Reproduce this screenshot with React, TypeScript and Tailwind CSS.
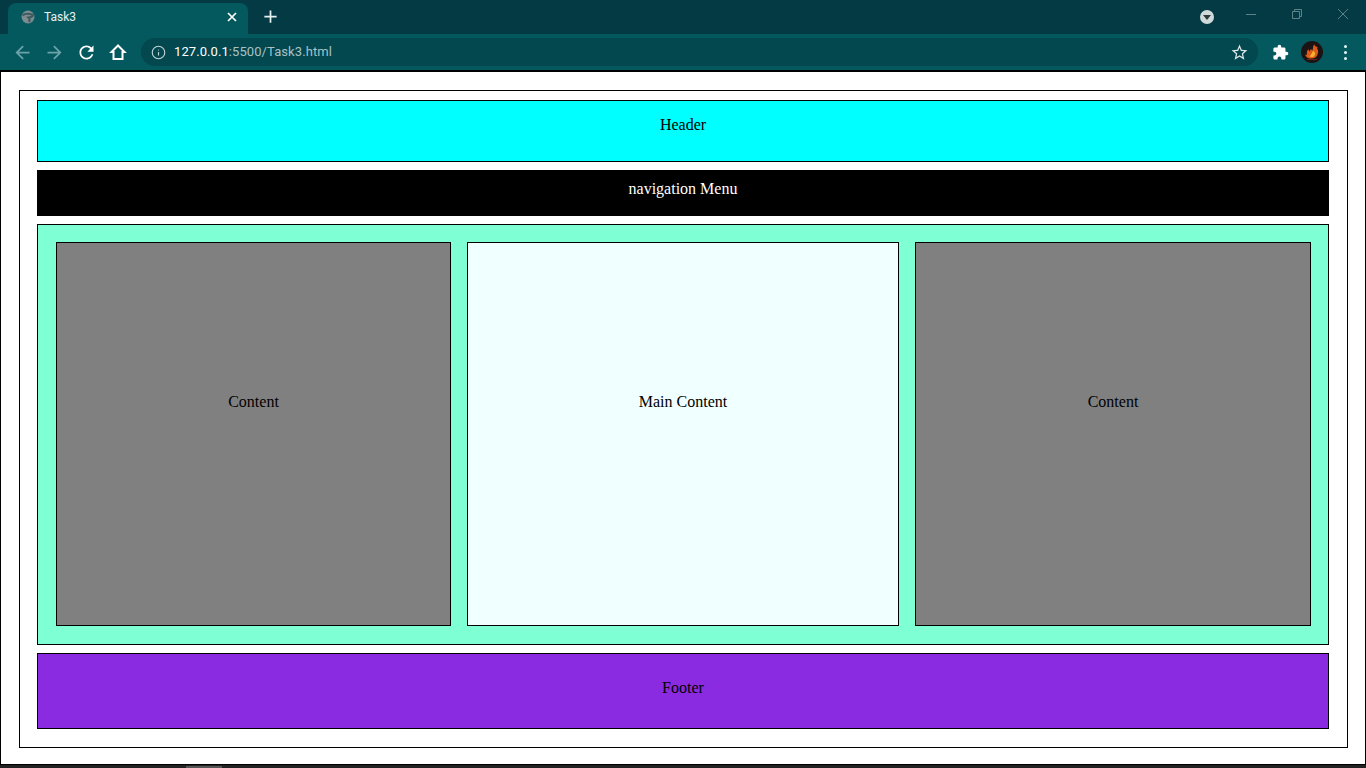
import { Info } from "lucide-react"

function Glyph({ d, className }: { d: string; className: string }) {
  return (
    <svg viewBox="0 0 24 24" className={className} fill="currentColor">
      <path d={d} />
    </svg>
  )
}

function ToolButton({ d, className }: { d: string; className: string }) {
  return (
    <div className="w-8 h-8 flex items-center justify-center shrink-0">
      <Glyph d={d} className={className} />
    </div>
  )
}

function TabStrip() {
  return (
    <div className="h-[34px] bg-[#033a43] flex items-end shrink-0">
      <div className="ml-2 w-[240px] h-[31px] bg-[#04595f] rounded-t-lg flex items-center pl-3 pr-2 pb-[3px]">
        <svg viewBox="0 0 16 16" className="w-4 h-4 shrink-0">
          <circle cx="8" cy="8" r="6.500" fill="#7c8c90" />
          <path d="M2.500 6.500C5 4.500 9 4.500 13 6c-.5 2-2.500 2.500-4.500 2.500 1 1 1.500 3 .5 4.500" fill="none" stroke="#3f5a5f" strokeWidth="2" />
        </svg>
        <span className="ml-2 text-xs text-[#e6f0f1] font-['Roboto',sans-serif] flex-1">Task3</span>
        <svg viewBox="0 0 10 10" className="w-2.5 h-2.5 mr-[3px]" stroke="#ffffff" strokeWidth="1.7" fill="none">
          <path d="M1 1l8 8M9 1l-8 8" />
        </svg>
      </div>
      <div className="w-[44px] h-[34px] flex items-center justify-center pb-px">
        <Glyph d="M19 13h-6v6h-2v-6H5v-2h6V5h2v6h6v2z" className="w-[21px] h-[21px] text-[#e6f0f1]" />
      </div>
      <div className="flex-1" />
      <div className="h-[34px] flex items-center">
        <div className="w-[14px] h-[14px] rounded-full bg-[#d0dadb] flex items-center justify-center">
          <div className="w-0 h-0 border-l-[4px] border-r-[4px] border-t-[5px] border-l-transparent border-r-transparent border-t-[#2f3a3d]" />
        </div>
        <div className="w-[10px] h-px bg-[#5f8288] ml-8 mb-[6px]" />
        <svg viewBox="0 0 10 10" className="w-2.5 h-2.5 ml-9 mb-[6px]" stroke="#5f8288" fill="none">
          <path d="M.5 2.500h7v7h-7zM2.500 2.500v-2h7v7h-2" />
        </svg>
        <svg viewBox="0 0 10 10" className="w-2.5 h-2.5 ml-9 mr-[18px] mb-[6px]" stroke="#5f8288" fill="none">
          <path d="M0 0l10 10M10 0L0 10" />
        </svg>
      </div>
    </div>
  )
}

function Toolbar() {
  return (
    <div className="h-9 bg-[#04595f] flex items-center pl-[6px] shrink-0">
      <ToolButton d="M20 11H7.830l5.590-5.590L12 4l-8 8 8 8 1.410-1.410L7.830 13H20v-2z" className="w-[21px] h-[21px] text-[#6ba3a8]" />
      <ToolButton d="M4 13h12.170l-5.590 5.590L12 20l8-8-8-8-1.410 1.410L16.170 11H4v2z" className="w-[21px] h-[21px] text-[#6ba3a8]" />
      <ToolButton d="M17.650 6.350C16.200 4.900 14.210 4 12 4c-4.420 0-7.990 3.580-7.990 8s3.570 8 7.990 8c3.730 0 6.840-2.550 7.730-6h-2.080c-.820 2.330-3.040 4-5.650 4-3.310 0-6-2.690-6-6s2.690-6 6-6c1.660 0 3.140.690 4.220 1.780L13 11h7V4l-2.350 2.350z" className="w-[21px] h-[21px] text-white" />
      <div className="w-8 h-8 flex items-center justify-center shrink-0">
        <svg viewBox="0 0 18 18" className="w-[18px] h-[18px]" fill="none" stroke="#ffffff" strokeWidth="2" strokeLinejoin="miter">
          <path d="M9 2.500 2.500 9H4.500v7h9V9h2z" />
        </svg>
      </div>
      <div className="ml-[7px] flex-1 h-7 rounded-full bg-[#03474f] flex items-center pl-[10px] pr-[9px]">
        <Info className="w-[15px] h-[15px] text-[#c3d5d7]" strokeWidth={1.8} />
        <div className="ml-[8px] flex-1 text-[13px] tracking-[0.08px] font-['Roboto',sans-serif] text-[#a6c2c5]">
          <span className="text-white">127.0.0.1</span>:5500/Task3.html
        </div>
        <Glyph
          d="M22 9.240l-7.190-.620L12 2 9.190 8.630 2 9.240l5.460 4.730L5.820 21 12 17.270 18.180 21l-1.630-7.030L22 9.240zM12 15.400l-3.760 2.270 1-4.280-3.320-2.880 4.380-.380L12 6.100l1.710 4.040 4.380.380-3.320 2.880 1 4.280L12 15.400z"
          className="w-[19px] h-[19px] text-[#dbe6e7]"
        />
      </div>
      <div className="ml-[6px]" />
      <ToolButton
        d="M20.500 11H19V7c0-1.100-.900-2-2-2h-4V3.500C13 2.120 11.880 1 10.500 1S8 2.120 8 3.500V5H4c-1.100 0-1.990.900-1.990 2v3.800H3.500c1.490 0 2.700 1.210 2.700 2.700s-1.210 2.700-2.700 2.700H2V20c0 1.100.900 2 2 2h3.800v-1.500c0-1.490 1.210-2.700 2.700-2.700 1.490 0 2.700 1.210 2.700 2.700V22H17c1.100 0 2-.900 2-2v-4h1.500c1.380 0 2.500-1.120 2.500-2.500S21.880 11 20.500 11z"
        className="w-[17px] h-[17px] text-white"
      />
      <div className="w-8 h-8 flex items-center justify-center shrink-0">
        <svg viewBox="0 0 22 22" className="w-[22px] h-[22px]">
          <circle cx="11" cy="11" r="11" fill="#1c1414" />
          <path d="M13 3c.5 2 2 3 3.500 3-.5 1-.5 2 .5 3 .5 3-.5 6-2.500 7.500-2 1.200-5 1.500-7.500.5-1.500-.8-2.500-2-3-3.500 1 .5 1.500.5 2 0-.5-2 0-4 1.500-5.500 0 1.200.5 2 1 2.500.5-1.500 1-2 2-2.500 0 1 .5 1.500 1 1.500.5-2 .5-4.500 1.500-6z" fill="#dd5a1a" />
          <path d="M12 9c.5 1.500 1 2 2 2.500.3 2-.5 3.500-2 4.500-1.500.3-3 0-4-1 1 0 1.500-.5 2-1.500.8-.5 1.500-2.500 2-4.500z" fill="#f6b32d" />
          <path d="M6 18.500h10" stroke="#8a2a12" strokeWidth="0.700" />
        </svg>
      </div>
      <div className="w-8 h-8 ml-px flex flex-col items-center justify-center gap-[3px] shrink-0">
        <div className="w-[3px] h-[3px] rounded-full bg-[#e6f5f6]" />
        <div className="w-[3px] h-[3px] rounded-full bg-[#e6f5f6]" />
        <div className="w-[3px] h-[3px] rounded-full bg-[#e6f5f6]" />
      </div>
      <div className="w-[5px]" />
    </div>
  )
}

export default function App() {
  return (
    <div className="w-[1366px] h-[768px] overflow-hidden flex flex-col bg-[#222222] font-['Liberation_Serif',serif] text-black text-base">
      <TabStrip />
      <Toolbar />
      <div className="h-[695px] border border-t-2 border-black bg-white pt-[18px] pl-[18px] pr-[17px] shrink-0">
        <div className="h-[658px] border border-black pl-[17px] pr-[18px] pt-[9px] flex flex-col gap-2">
          <div className="h-[62px] border border-black bg-[#00ffff] text-center pt-3">Header</div>
          <div className="h-[46px] bg-black text-white text-center pt-[7px]">navigation Menu</div>
          <div className="h-[421px] border border-black bg-[#7fffd4] pt-[17px] pl-[18px] flex gap-4">
            <div className="w-[395px] h-[384px] border border-black bg-[#808080] text-center pt-[147px]">Content</div>
            <div className="w-[432px] h-[384px] border border-black bg-[#f0ffff] text-center pt-[147px]">Main Content</div>
            <div className="w-[396px] h-[384px] border border-black bg-[#808080] text-center pt-[147px]">Content</div>
          </div>
          <div className="h-[76px] border border-black bg-[#8a2be2] text-center pt-[22px]">Footer</div>
        </div>
      </div>
      <div className="h-[3px] flex pt-px">
        <div className="ml-[186px] w-[36px] bg-[#555555]" />
      </div>
    </div>
  )
}
